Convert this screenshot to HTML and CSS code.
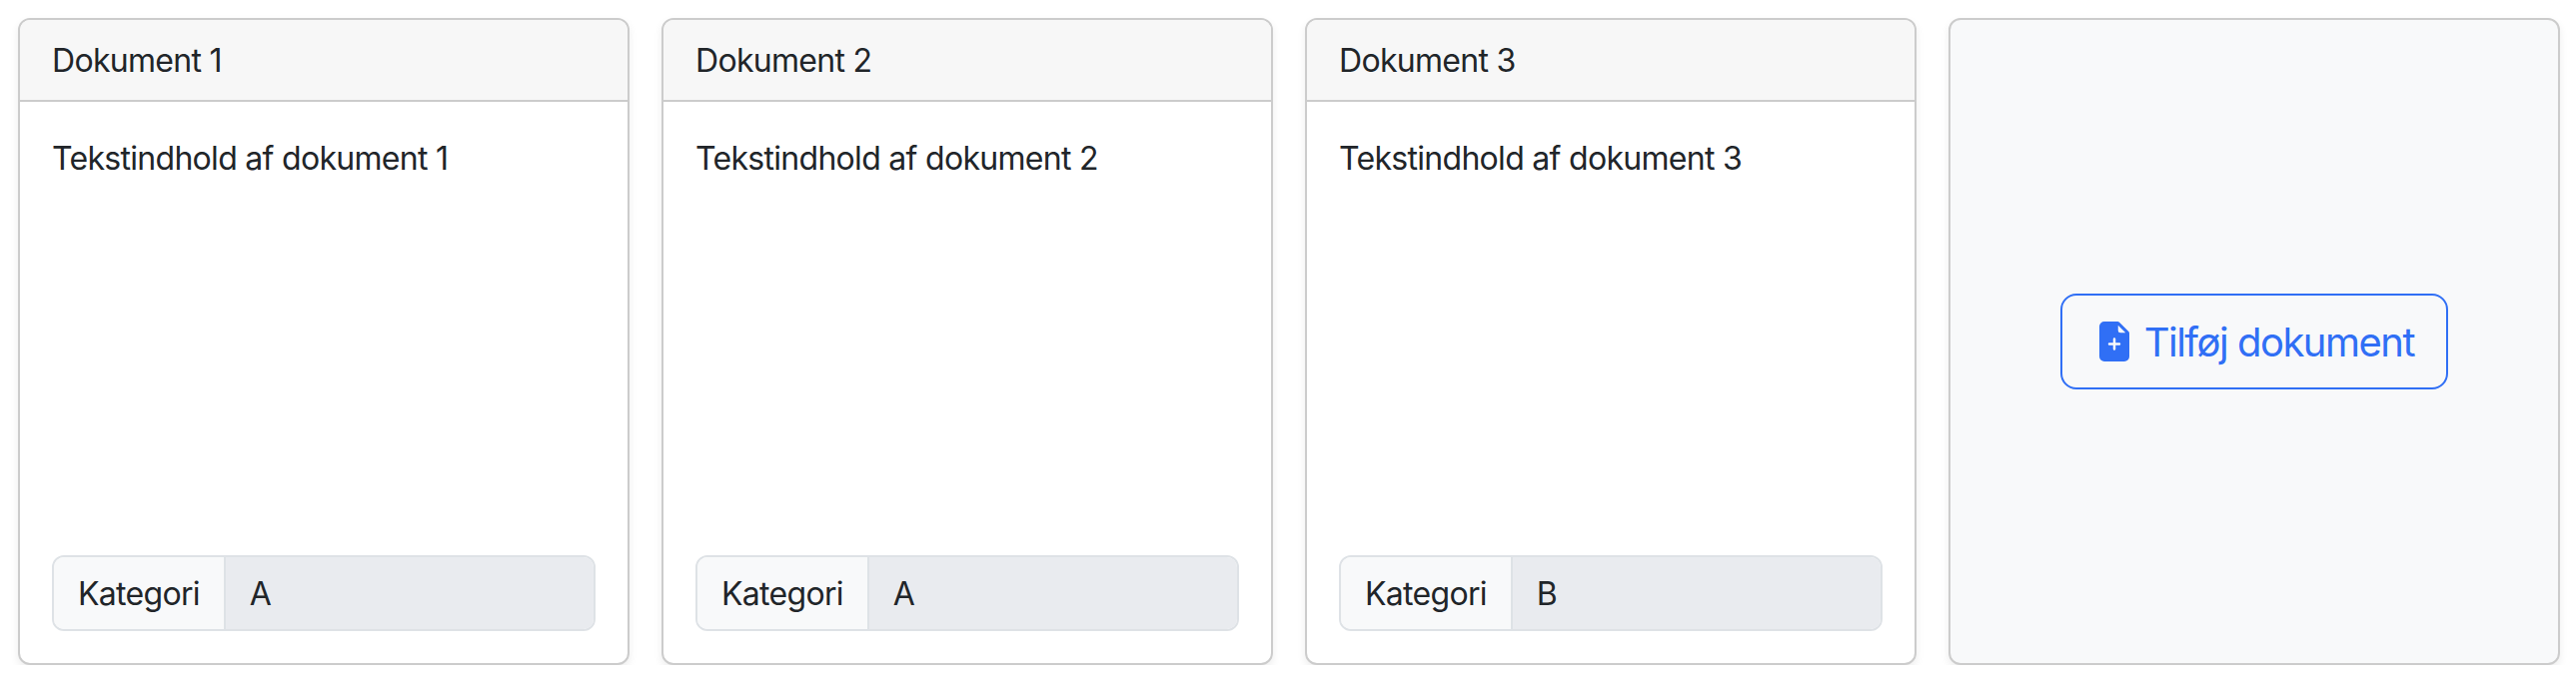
FILE: index.html
```html
<!DOCTYPE html>
<html lang="en">
<head>
    <meta charset="UTF-8">
    <title>Dokumenter</title>
    <link rel="stylesheet" href="styles.css">
</head>
<body>

<div class="cards">
    <div class="card">
        <div class="card-header">Dokument 1</div>
        <div class="card-body">
            <p class="card-text">Tekstindhold af dokument 1</p>
            <div class="input-group">
                <span class="input-label">Kategori</span>
                <span class="input-value">A</span>
            </div>
        </div>
    </div>

    <div class="card">
        <div class="card-header">Dokument 2</div>
        <div class="card-body">
            <p class="card-text">Tekstindhold af dokument 2</p>
            <div class="input-group">
                <span class="input-label">Kategori</span>
                <span class="input-value">A</span>
            </div>
        </div>
    </div>

    <div class="card">
        <div class="card-header">Dokument 3</div>
        <div class="card-body">
            <p class="card-text">Tekstindhold af dokument 3</p>
            <div class="input-group">
                <span class="input-label">Kategori</span>
                <span class="input-value">B</span>
            </div>
        </div>
    </div>

    <div class="card card-add">
        <button class="btn-add" type="button">
            <svg class="icon" viewBox="0 0 16 16" fill="currentColor" aria-hidden="true">
                <path d="M9.293 0H4a2 2 0 0 0-2 2v12a2 2 0 0 0 2 2h8a2 2 0 0 0 2-2V4.707A1 1 0 0 0 13.707 4L10 .293A1 1 0 0 0 9.293 0zM9.5 3.5v-2l3 3h-2a1 1 0 0 1-1-1zM8.5 7v1.5H10a.5.5 0 0 1 0 1H8.5V11a.5.5 0 0 1-1 0V9.5H6a.5.5 0 0 1 0-1h1.5V7a.5.5 0 0 1 1 0z"/>
            </svg>
            Tilføj dokument
        </button>
    </div>
</div>

</body>
</html>
```

FILE: styles.css
```css
* {
    box-sizing: border-box;
}

body {
    margin: 0;
    padding: 18px 16px 0 18px;
    background: #fff;
    color: #212529;
    font-family: Inter, "Liberation Sans", sans-serif;
    font-size: 32px;
    line-height: 48px;
    letter-spacing: -.7px;
}

.cards {
    display: grid;
    grid-template-columns: repeat(4, 1fr);
    gap: 32px;
    height: 648px;
}

.card {
    display: flex;
    flex-direction: column;
    background: #fff;
    border: 2px solid #ccc;
    border-radius: 12px;
    box-shadow: 0 4px 8px rgba(0, 0, 0, .075);
    overflow: hidden;
}

.card-header {
    padding: 17px 32px 15px;
    background: #f7f7f7;
    border-bottom: 2px solid #ccc;
}

.card-body {
    display: flex;
    flex-direction: column;
    flex: 1;
    padding: 33px 32px 32px;
}

.card-text {
    margin: 0;
}

.input-group {
    display: flex;
    margin-top: auto;
    border: 2px solid #dee2e6;
    border-radius: 12px;
    overflow: hidden;
}

.input-label {
    padding: 13px 24px 11px;
    background: #f8f9fa;
    border-right: 2px solid #dee2e6;
}

.input-value {
    flex: 1;
    padding: 13px 24px 11px;
    background: #e9ebef;
}

.card-add {
    align-items: center;
    justify-content: center;
    background: #f8f9fa;
}

.btn-add {
    padding: 17px 32px 15px;
    background: transparent;
    border: 2px solid #306ff5;
    border-radius: 16px;
    color: #306ff5;
    font-family: inherit;
    font-size: 40px;
    line-height: 60px;
    letter-spacing: -1.5px;
}

.icon {
    width: 40px;
    height: 40px;
    vertical-align: -5px;
}
```
